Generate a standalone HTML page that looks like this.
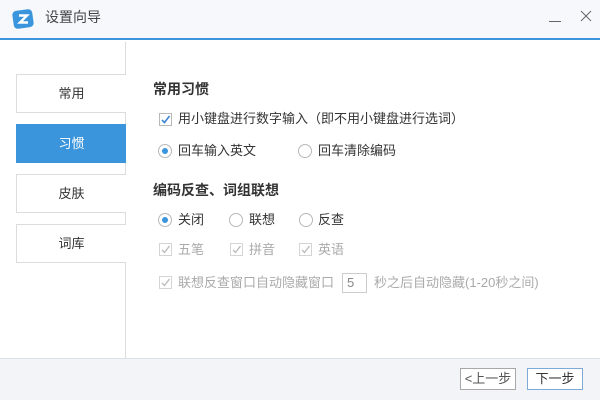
<!DOCTYPE html>
<html><head><meta charset="utf-8"><style>
*{margin:0;padding:0;box-sizing:border-box}
body{width:600px;height:400px;position:relative;background:#fff;font-family:"Liberation Sans","Noto Sans CJK SC",sans-serif;font-size:13px;color:#333;overflow:hidden}
.a{position:absolute;white-space:nowrap;line-height:16px}
.title{left:0;top:0;width:600px;height:40px;background:#f6f8fc;border-bottom:2px solid #3b95dc}
.side{left:125px;top:42px;width:1px;height:316px;background:#dcdcdc}
.nav{position:absolute;left:16px;width:110px;height:39px;border:1px solid #dcdcdc;border-right:none;text-align:center;line-height:37px;font-size:13px;color:#333;background:#fff}
.nav.on{background:#3b95dc;color:#fff;border-color:#3b95dc}
.cb{position:absolute;width:13px;height:13px;border:1px solid #b8b8b8;background:#fff}
.rd{position:absolute;width:14px;height:14px;border:1px solid #b8b8b8;border-radius:50%;background:#fff}
.rd.on::after{content:"";position:absolute;left:3px;top:3px;width:6px;height:6px;border-radius:50%;background:#3b95dc}
.dis{color:#aaa}
.foot{left:0;top:358px;width:600px;height:42px;background:#f2f4f8;border-top:1px solid #dde2ea}
.btn{position:absolute;top:368px;height:22px;width:56px;border:1px solid #a8a8a8;background:#fff;text-align:center;line-height:20px;font-size:13px;color:#333}
</style></head><body>
<div class="a title"></div>
<svg class="a" style="left:12px;top:8px" width="22" height="22" viewBox="0 0 22 22"><rect x="1" y="2" width="20" height="18" rx="4" fill="#3b95dc" transform="rotate(-8 11 11)"/><path d="M7 7.5h8l-7 7h8" stroke="#fff" stroke-width="2.4" fill="none"/></svg>
<div class="a" style="left:45px;top:9px;font-size:14px;color:#444">设置向导</div>
<div class="a" style="left:549px;top:21px;width:12px;height:1px;background:#666"></div>
<svg class="a" style="left:580px;top:10px" width="12" height="12"><path d="M1 1L11 11M11 1L1 11" stroke="#666" stroke-width="1"/></svg>
<div class="a side"></div>
<div class="nav" style="top:74px">常用</div>
<div class="nav on" style="top:124px">习惯</div>
<div class="nav" style="top:174px">皮肤</div>
<div class="nav" style="top:224px">词库</div>

<div class="a" style="left:153px;top:81px;font-weight:bold;font-size:14px">常用习惯</div>
<div class="cb" style="left:159px;top:113px"><svg width="11" height="11" style="position:absolute;left:0;top:0"><path d="M2 6l2.5 2.5L9.5 2" stroke="#3b85d0" stroke-width="1.6" fill="none"/></svg></div>
<div class="a" style="left:178px;top:111px">用小键盘进行数字输入（即不用小键盘进行选词）</div>
<div class="rd on" style="left:158px;top:144px"></div>
<div class="a" style="left:178px;top:143px">回车输入英文</div>
<div class="rd" style="left:298px;top:144px"></div>
<div class="a" style="left:318px;top:143px">回车清除编码</div>

<div class="a" style="left:153px;top:182px;font-weight:bold;font-size:14px">编码反查、词组联想</div>
<div class="rd on" style="left:158px;top:213px"></div>
<div class="a" style="left:178px;top:212px">关闭</div>
<div class="rd" style="left:229px;top:213px"></div>
<div class="a" style="left:249px;top:212px">联想</div>
<div class="rd" style="left:299px;top:213px"></div>
<div class="a" style="left:318px;top:212px">反查</div>

<div class="cb" style="left:159px;top:243px;border-color:#d5d5d5"><svg width="11" height="11" style="position:absolute"><path d="M2 6l2.5 2.5L9.5 2" stroke="#bbb" stroke-width="1.4" fill="none"/></svg></div>
<div class="a dis" style="left:178px;top:242px">五笔</div>
<div class="cb" style="left:230px;top:243px;border-color:#d5d5d5"><svg width="11" height="11" style="position:absolute"><path d="M2 6l2.5 2.5L9.5 2" stroke="#bbb" stroke-width="1.4" fill="none"/></svg></div>
<div class="a dis" style="left:249px;top:242px">拼音</div>
<div class="cb" style="left:299px;top:243px;border-color:#d5d5d5"><svg width="11" height="11" style="position:absolute"><path d="M2 6l2.5 2.5L9.5 2" stroke="#bbb" stroke-width="1.4" fill="none"/></svg></div>
<div class="a dis" style="left:318px;top:242px">英语</div>

<div class="cb" style="left:159px;top:276px;border-color:#d5d5d5"><svg width="11" height="11" style="position:absolute"><path d="M2 6l2.5 2.5L9.5 2" stroke="#bbb" stroke-width="1.4" fill="none"/></svg></div>
<div class="a dis" style="left:178px;top:275px">联想反查窗口自动隐藏窗口</div>
<div class="a dis" style="left:342px;top:273px;width:25px;height:20px;border:1px solid #ccc;padding-left:4px;line-height:18px;color:#888">5</div>
<div class="a dis" style="left:374px;top:275px">秒之后自动隐藏(1-20秒之间)</div>

<div class="a foot"></div>
<div class="btn" style="left:460px;color:#555">&lt;上一步</div>
<div class="btn" style="left:527px;border-color:#7fa9d6">下一步</div>
</body></html>
